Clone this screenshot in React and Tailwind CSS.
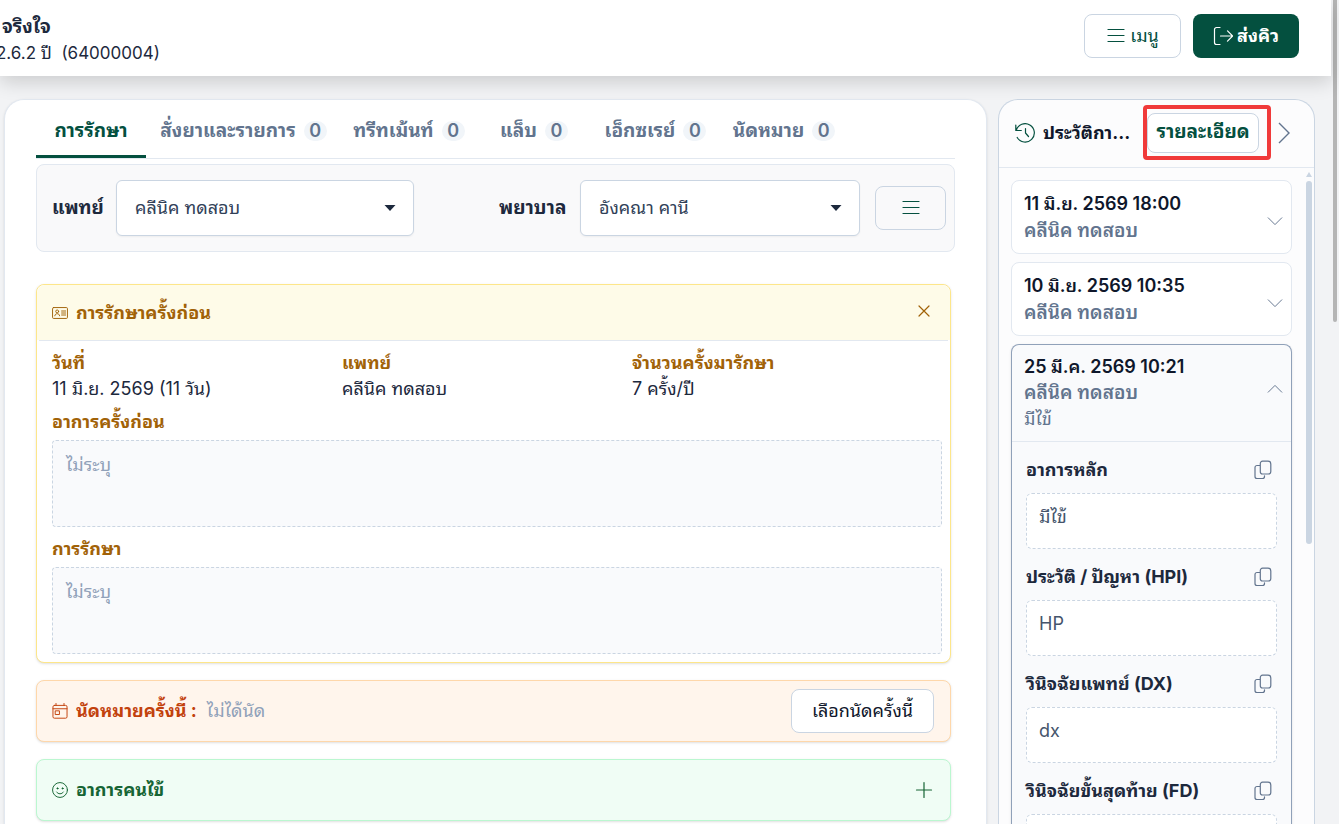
// Tabs across the top of the treatment card
const tabs = [
  { label: 'การรักษา', width: 'w-[110px]', active: true },
  { label: 'สั่งยาและรายการ', count: 0, width: 'w-[195px]' },
  { label: 'ทรีทเม้นท์', count: 0, width: 'w-[136px]' },
  { label: 'แล็บ', count: 0, width: 'w-[114px]' },
  { label: 'เอ็กซเรย์', count: 0, width: 'w-[129px]' },
  { label: 'นัดหมาย', count: 0, width: 'w-[128px]' },
]

const lastVisit = [
  { label: 'วันที่', value: '11 มิ.ย. 2569 (11 วัน)' },
  { label: 'แพทย์', value: 'คลีนิค ทดสอบ' },
  { label: 'จำนวนครั้งมารักษา', value: '7 ครั้ง/ปี' },
]

const visits = [
  { date: '11 มิ.ย. 2569 18:00', doctor: 'คลีนิค ทดสอบ' },
  { date: '10 มิ.ย. 2569 10:35', doctor: 'คลีนิค ทดสอบ' },
]

const notes = [
  { label: 'อาการหลัก', value: 'มีไข้' },
  { label: 'ประวัติ / ปัญหา (HPI)', value: 'HP' },
  { label: 'วินิจฉัยแพทย์ (DX)', value: 'dx' },
  { label: 'วินิจฉัยขั้นสุดท้าย (FD)', value: '' },
]

function Icon({ size = 20, className = '', children }) {
  return (
    <svg
      width={size}
      height={size}
      viewBox="0 0 20 20"
      fill="none"
      stroke="currentColor"
      strokeWidth="1.2"
      strokeLinecap="round"
      strokeLinejoin="round"
      className={`shrink-0 ${className}`}
      aria-hidden="true"
    >
      {children}
    </svg>
  )
}

const MenuIcon = () => (
  <Icon><path d="M2 3.500h16M2 9.500h16M2 15.500h16" /></Icon>
)

const ExitIcon = () => (
  <Icon><path d="M7 1.500H3.500a2 2 0 0 0-2 2v13a2 2 0 0 0 2 2H7M7.500 10H20M14.500 4.800L19.700 10l-5.200 5.200" /></Icon>
)

const HistoryIcon = () => (
  <Icon size={20} className="text-[#04503f]">
    <path d="M.8 2v5.500h5.500M1.300 7.300A9.200 9.200 0 1 1 2.200 14.500M10.500 5.500V10l3 3.500" />
  </Icon>
)

const CopyIcon = () => (
  <Icon size={20}>
    <path d="M9.500 1.200h5.500a2.800 2.800 0 0 1 2.800 2.800v7.500a2.500 2.500 0 0 1-2.500 2.500H9.500A2.200 2.200 0 0 1 7.300 11.800V3.400a2.200 2.200 0 0 1 2.200-2.200zM7 5.500H4a2 2 0 0 0-2 2v9a2 2 0 0 0 2 2h5.500a2 2 0 0 0 2-2v-.7" />
  </Icon>
)

const CardIcon = () => (
  <Icon size={16}>
    <path d="M2 3.200h16a1.300 1.300 0 0 1 1.300 1.300v11a1.300 1.300 0 0 1-1.300 1.300H2A1.300 1.300 0 0 1 .7 15.500v-11A1.300 1.300 0 0 1 2 3.200zM3.500 13.500c.3-1.800 1.400-2.600 3-2.600s2.700.8 3 2.600M12 7.500h5M12 10h5M12 12.500h5" />
    <circle cx="6.500" cy="8" r="1.800" />
  </Icon>
)

const CalendarIcon = () => (
  <Icon size={16}>
    <path d="M3 3h14a1.800 1.800 0 0 1 1.800 1.800v12.400A1.800 1.800 0 0 1 17 19H3a1.800 1.800 0 0 1-1.800-1.800V4.800A1.800 1.800 0 0 1 3 3zM1.200 7.200h17.600M5 .6V3M15 .6V3M4.500 9.800h4.800v4.600H4.500z" />
  </Icon>
)

const SmileIcon = () => (
  <Icon size={16}>
    <circle cx="10" cy="10" r="9.300" />
    <path d="M5.800 12.500c1 1.500 2.400 2.200 4.200 2.200s3.200-.7 4.200-2.200" />
    <circle cx="6.800" cy="8" r=".7" fill="currentColor" />
    <circle cx="13.200" cy="8" r=".7" fill="currentColor" />
  </Icon>
)

function Select({ id, value, className }) {
  return (
    <div className={`relative ${className}`}>
      <select
        id={id}
        className="h-14 w-full appearance-none rounded-md border border-slate-300 bg-white pl-[18px] pr-10 text-lg text-slate-700 shadow-xs"
      >
        <option>{value}</option>
      </select>
      <svg width="12" height="6" viewBox="0 0 12 6" className="pointer-events-none absolute right-[18px] top-[25px] text-slate-800" aria-hidden="true">
        <path d="M.5 0h11L6 6z" fill="currentColor" />
      </svg>
    </div>
  )
}

function PastNote({ label }) {
  return (
    <div>
      <h3 className="h-[26px] text-lg font-bold leading-[26px] text-[#a16207]">{label}</h3>
      <div className="mt-[5px] h-[87px] rounded border border-dashed border-slate-300 bg-[#f9fafc] px-[13px] py-3 text-lg leading-6 text-slate-400">
        ไม่ระบุ
      </div>
    </div>
  )
}

function TreatmentCard() {
  return (
    <main className="min-w-0 flex-1 rounded-t-[20px] border border-b-0 border-slate-200 bg-white px-[31px] shadow-sm">

      {/* ── TABS ── */}
      <nav className="flex h-[59px] border-b border-slate-200">
        {tabs.map((t) => (
          <button
            key={t.label}
            className={`flex h-full shrink-0 items-center justify-center gap-2 pt-1 text-[19px] font-bold ${t.width} ${
              t.active ? 'border-b-[3px] border-[#04503f] pt-2 text-[#04503f]' : 'text-slate-500'
            }`}
          >
            {t.label}
            {t.count !== undefined && (
              <span className="flex h-5 w-[23px] items-center justify-center rounded-full bg-slate-100 text-lg font-semibold">
                {t.count}
              </span>
            )}
          </button>
        ))}
      </nav>

      {/* ── DOCTOR / NURSE ── */}
      <div className="mt-[5px] flex h-[88px] items-center rounded-lg border border-slate-200 bg-[#f9f9fa] pl-[15px] pr-2">
        <label htmlFor="doctor" className="w-16 shrink-0 text-[19px] font-bold text-slate-800">แพทย์</label>
        <Select id="doctor" value="คลีนิค ทดสอบ" className="w-[298px]" />
        <label htmlFor="nurse" className="ml-auto w-[81px] shrink-0 text-[19px] font-bold text-slate-800">พยาบาล</label>
        <Select id="nurse" value="อังคณา คานี" className="w-[280px]" />
        <button aria-label="ตัวเลือก" className="ml-[15px] flex h-11 w-[71px] items-center justify-center rounded-lg border border-slate-300 text-[#04503f]">
          <MenuIcon />
        </button>
      </div>

      <div className="mr-1 mt-8 space-y-[17px]">

        {/* ── PREVIOUS TREATMENT ── */}
        <section className="h-[379px] rounded-lg border border-[#fde68a] bg-white shadow-sm">
          <div className="flex h-[55px] items-center rounded-t-lg bg-[#fefbe8] px-[15px] text-[#a16207]">
            <CardIcon />
            <h2 className="ml-2 text-lg font-bold">การรักษาครั้งก่อน</h2>
            <button aria-label="ปิด" className="mb-1 ml-auto mr-px">
              <Icon size={20}><path d="M5 5l10 10M15 5L5 15" /></Icon>
            </button>
          </div>
          <div className="mx-0.5 border-t border-slate-200 px-[13px] pt-[9px]">
            <dl className="grid grid-cols-[290px_290px_1fr] text-lg leading-[26px]">
              {lastVisit.map((f) => (
                <div key={f.label}>
                  <dt className="font-bold text-[#a16207]">{f.label}</dt>
                  <dd className="text-slate-800">{f.value}</dd>
                </div>
              ))}
            </dl>
            <div className="mr-[-7px] mt-[7px] space-y-[9px]">
              <PastNote label="อาการครั้งก่อน" />
              <PastNote label="การรักษา" />
            </div>
          </div>
        </section>

        {/* ── APPOINTMENT ── */}
        <section className="flex h-[62px] items-center rounded-lg border border-[#fed7aa] bg-[#fff5ec] pl-[15px] pr-4 shadow-sm">
          <span className="text-[#c2410c]"><CalendarIcon /></span>
          <h2 className="ml-2 text-lg font-bold text-[#c2410c]">นัดหมายครั้งนี้ :</h2>
          <span className="ml-2.5 text-lg text-slate-400">ไม่ได้นัด</span>
          <button className="ml-auto h-11 w-[143px] rounded-lg border border-slate-300 bg-white text-lg text-slate-900">
            เลือกนัดครั้งนี้
          </button>
        </section>

        {/* ── SYMPTOMS ── */}
        <section className="flex h-[62px] items-center rounded-lg border border-[#bbf7d0] bg-[#f0fdf5] px-[15px] text-[#166534] shadow-sm">
          <SmileIcon />
          <h2 className="ml-2 text-lg font-bold">อาการคนไข้</h2>
          <button aria-label="เพิ่ม" className="ml-auto mr-px">
            <Icon size={20}><path d="M10 2.500v15M2.500 10h15" /></Icon>
          </button>
        </section>
      </div>
    </main>
  )
}

function HistoryPanel() {
  return (
    <aside className="flex w-[317px] shrink-0 flex-col rounded-t-[20px] border border-b-0 border-slate-300 bg-[#fcfcfd]">
      <div className="flex h-[68px] shrink-0 items-center border-b border-slate-200 pb-0.5 pl-4 pr-6">
        <HistoryIcon />
        <h2 className="ml-2 mr-2 w-24 truncate text-lg font-bold leading-8 text-slate-900">ประวัติการรักษา</h2>
        <div className="relative">
          <button className="h-10 w-[112px] rounded-lg border border-slate-300 bg-white text-[19px] font-bold text-[#04503f]">
            รายละเอียด
          </button>
          <div className="pointer-events-none absolute -bottom-[7px] -left-1 -right-3 -top-2 rounded border-4 border-[#f03a3a]" />
        </div>
        <button aria-label="ย่อ" className="ml-auto text-slate-500">
          <svg width="12" height="22" viewBox="0 0 12 22" fill="none" stroke="currentColor" strokeWidth="1.4" aria-hidden="true">
            <path d="M1 1l10 10L1 21" />
          </svg>
        </button>
      </div>

      <div className="flex min-h-0 flex-1">
        <div className="min-w-0 flex-1 space-y-2 pl-3 pt-3">
          {visits.map((v) => (
            <button
              key={v.date}
              className="flex h-[74px] w-full items-center justify-between rounded-lg border border-slate-200 bg-white pl-3 pr-2 text-left"
            >
              <span>
                <span className="block text-lg font-semibold leading-7 text-slate-900">{v.date}</span>
                <span className="block text-[19px] font-semibold leading-[26px] text-slate-500">{v.doctor}</span>
              </span>
              <Icon size={16} className="mt-2 text-slate-500"><path d="M1.500 6L10 14.500 18.500 6" /></Icon>
            </button>
          ))}

          <article className="rounded-t-lg border border-b-0 border-slate-400 bg-[#f9fafc] shadow-sm">
            <button className="flex h-[97px] w-full items-center justify-between border-b border-slate-200 pl-3 pr-2 text-left">
              <span>
                <span className="block text-lg font-semibold leading-[26px] text-slate-900">25 มี.ค. 2569 10:21</span>
                <span className="block text-[19px] font-semibold leading-[26px] text-slate-500">คลีนิค ทดสอบ</span>
                <span className="block text-lg leading-[26px] text-slate-500">มีไข้</span>
              </span>
              <Icon size={16} className="mb-2 text-slate-500"><path d="M1.500 14L10 5.500 18.500 14" /></Icon>
            </button>
            <div className="px-3.5 pt-3">
              {notes.map((n) => (
                <div key={n.label} className="mb-3">
                  <div className="flex h-8 items-center justify-between pr-1 text-slate-500">
                    <h3 className="text-lg font-bold text-slate-800">{n.label}</h3>
                    <button aria-label="คัดลอก"><CopyIcon /></button>
                  </div>
                  <div className="mt-[7px] h-14 rounded-md border border-dashed border-slate-300 bg-white px-3 py-2.5 text-lg leading-[26px] text-slate-600">
                    {n.value}
                  </div>
                </div>
              ))}
            </div>
          </article>
        </div>

        {/* panel scrollbar */}
        <div className="ml-3.5 mr-0.5 flex w-1.5 flex-col items-center pt-1">
          <svg width="6" height="5" viewBox="0 0 6 5" className="text-slate-300" aria-hidden="true">
            <path d="M3 0l3 5H0z" fill="currentColor" />
          </svg>
          <div className="mt-1 h-[363px] w-full rounded-full bg-slate-300" />
        </div>
      </div>
    </aside>
  )
}

export default function App() {
  return (
    <div className="flex h-screen overflow-hidden bg-[#f2f3f5] font-['Inter','Leelawadee_UI','Noto_Sans_Thai_Looped','Noto_Looped_Thai','Loma','Waree','Garuda','Tahoma',sans-serif] text-slate-800">
      <div className="flex min-w-0 flex-1 flex-col">

        {/* ── PATIENT HEADER ── */}
        <header className="z-10 flex h-[76px] shrink-0 items-center bg-white pr-8 shadow-[0_6px_18px_rgba(0,0,0,0.16)]">
          <div className="pt-1 leading-[26px]">
            <p className="pl-0.5 text-[19px] font-bold">จริงใจ</p>
            <p className="-ml-1 whitespace-pre text-[17px]">2.6.2 ปี  (64000004)</p>
          </div>
          <div className="mb-1 ml-auto flex gap-3 text-lg">
            <button className="flex h-11 w-[97px] items-center justify-center gap-1 rounded-lg border border-slate-300 text-[#04503f]">
              <MenuIcon />
              เมนู
            </button>
            <button className="flex h-11 w-[106px] items-center justify-center gap-1 rounded-lg bg-[#04503f] font-bold text-white">
              <ExitIcon />
              ส่งคิว
            </button>
          </div>
        </header>

        <div className="flex min-h-0 flex-1 gap-[11px] overflow-hidden pl-1 pr-4 pt-[23px]">
          <TreatmentCard />
          <HistoryPanel />
        </div>
      </div>

      {/* page scrollbar */}
      <div className="w-2 shrink-0 px-0.5">
        <div className="h-[322px] rounded-b-full bg-[#b5b5b5]" />
      </div>
    </div>
  )
}
